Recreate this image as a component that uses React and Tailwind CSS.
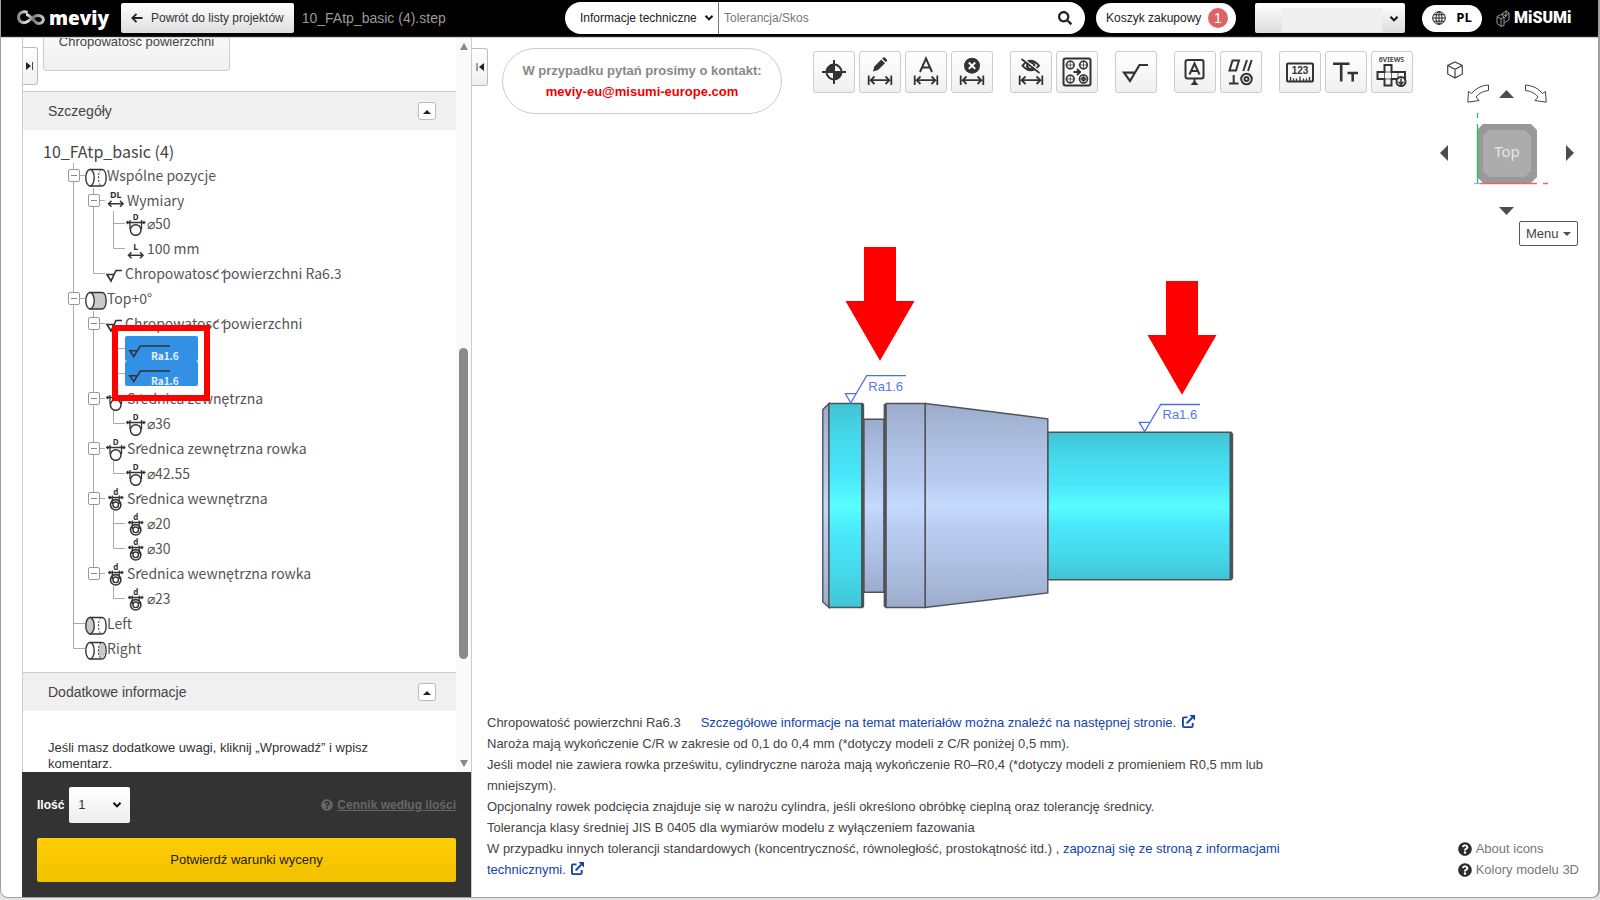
// App.jsx
import React, { useState } from 'react';
import { FaSearch, FaQuestionCircle } from 'react-icons/fa';

const INK = '#333';

// ---------- small shared drawings ----------

function Chevron({ className }) {
  return (
    <svg viewBox="0 0 10 8" className={className} aria-hidden="true">
      <path d="M1.5 1.8 5 5.4 8.5 1.8" fill="none" stroke="#111" strokeWidth="2" />
    </svg>
  );
}

function Triangle({ points, className, color = '#4d4d4d', box = '0 0 16 10' }) {
  return (
    <svg viewBox={box} className={className} aria-hidden="true">
      <polygon points={points} fill={color} />
    </svg>
  );
}

function ExternalIcon() {
  return (
    <svg viewBox="0 0 14 14" className="inline w-[13px] h-[13px] ml-[2px] -mt-1" aria-hidden="true">
      <path d="M6 2.500H2.200Q1 2.500 1 3.700V11.800Q1 13 2.200 13H10.300Q11.500 13 11.500 11.800V8.500" fill="none" stroke="#1243ad" strokeWidth="2" />
      <path d="M5 9 11 3" stroke="#1243ad" strokeWidth="2.200" />
      <path d="M8 0H14V6Z" fill="#1243ad" />
    </svg>
  );
}

// ---------- header ----------

function Header() {
  return (
    <header className="flex items-center h-[37px] shrink-0 bg-black pl-4 pr-[27px] border-b border-[#222]">
      <a href="#home" className="flex items-center gap-1 w-[104px]">
        <svg viewBox="0 0 28 16" className="w-7 h-4 shrink-0" aria-hidden="true">
          <defs>
            <linearGradient id="loop" x1="0" y1="0" x2="1" y2="0">
              <stop offset="0" stopColor="#8b858a" />
              <stop offset="0.35" stopColor="#e8e4e6" />
              <stop offset="0.6" stopColor="#7d767b" />
              <stop offset="1" stopColor="#c9c4c7" />
            </linearGradient>
          </defs>
          <path
            d="M10.500 2.500C6 .5 1.500 3 1.500 7.300C1.500 12 6.500 14 10.500 11.500C14 9 17 5.500 21 5.500C24.500 5.500 26.500 7.500 26.300 10C26 13 22 14.500 19 12.500C16 10 13 4.500 9 4.500"
            fill="none"
            stroke="url(#loop)"
            strokeWidth="3"
          />
        </svg>
        <span className="font-['Open_Sans',sans-serif] font-extrabold text-[19px] leading-6 text-white">meviy</span>
      </a>
      <button className="flex items-center h-[30px] px-[10px] gap-2 rounded-[2px] bg-linear-to-b from-white to-[#dedede] text-xs text-[#333] whitespace-nowrap">
        <svg viewBox="0 0 12 10" className="w-3 h-[10px]" aria-hidden="true">
          <path d="M5.500 .8 1.300 5 5.500 9.200M1.300 5H11.500" fill="none" stroke="#222" strokeWidth="1.800" />
        </svg>
        Powrót do listy projektów
      </button>
      <span className="ml-2 text-sm text-[#999] whitespace-nowrap">10_FAtp_basic (4).step</span>

      <form className="flex items-stretch ml-auto w-[520px] h-8 rounded-full bg-white overflow-hidden" onSubmit={(e) => e.preventDefault()}>
        <div className="relative w-[154px] border-r border-[#777]">
          <select aria-label="Zakres wyszukiwania" className="appearance-none w-full h-full pl-[15px] text-xs text-[#222] bg-transparent">
            <option>Informacje techniczne</option>
          </select>
          <Chevron className="absolute right-1 top-3 w-[10px] h-2 pointer-events-none" />
        </div>
        <input aria-label="Szukaj" placeholder="Tolerancja/Skos" className="grow px-[5px] text-xs placeholder:text-[#777] outline-none" />
        <button aria-label="Szukaj" className="pr-[13px]">
          <FaSearch className="w-[14px] h-[14px] text-[#222]" />
        </button>
      </form>
      <button className="flex items-center justify-between ml-[11px] w-[140px] h-[30px] pl-[10px] pr-2 rounded-full bg-white text-xs text-[#222] whitespace-nowrap">
        Koszyk zakupowy
        <span className="flex items-center justify-center w-5 h-5 rounded-full bg-[#e06363] text-sm text-white">1</span>
      </button>
      <div className="relative ml-[19px] w-[150px] h-[30px] rounded-[2px] bg-linear-to-b from-white to-[#dcdcdc]">
        <select aria-label="Konto" className="appearance-none w-full h-full bg-transparent" />
        <div className="absolute left-[27px] top-[5px] w-[100px] h-6 bg-[#efefef]" />
        <Chevron className="absolute right-[6px] top-3 w-[10px] h-2 pointer-events-none" />
      </div>
      <button className="flex items-center justify-center gap-[10px] ml-[17px] w-[60px] h-[27px] rounded-full bg-white text-[13px] font-bold font-['Open_Sans',sans-serif] text-black">
        <svg viewBox="0 0 14 14" className="w-[14px] h-[14px]" aria-hidden="true">
          <g fill="none" stroke="#222" strokeWidth="1">
            <circle cx="7" cy="7" r="6.300" />
            <ellipse cx="7" cy="7" rx="3" ry="6.300" />
            <path d="M7 .7V13.300M.7 7H13.300M1.700 3.800H12.300M1.700 10.200H12.300" />
          </g>
        </svg>
        PL
      </button>
      <a href="#misumi" className="flex items-center gap-1 ml-[14px] w-[75px]">
        <svg viewBox="0 0 14 17" className="w-[14px] h-[17px] shrink-0" aria-hidden="true">
          <g fill="none" stroke="#999" strokeWidth="1">
            <path d="M1 6.500 5 4.500 8 7V15.500L5 16.300 1 13.500ZM1 6.500 5 9 8 7M5 9V16" />
            <path d="M6 4 10 .8 13 3V10L8 13M10 .8V6L13 3M6 4 10 6 8 8" />
          </g>
        </svg>
        <span className="font-['Roboto',sans-serif] font-black text-[16px] leading-5 text-white">MiSUMi</span>
      </a>
    </header>
  );
}

// ---------- feature tree ----------

function Cylinder({ left = '#fff', body = '#fff', right, dashed }) {
  return (
    <svg viewBox="0 0 22 25" className="w-[22px] h-[25px] shrink-0" aria-hidden="true">
      <g stroke={INK} strokeWidth="1.400">
        <path d="M5 6.500H17C22.500 6.500 22.500 23 17 23H5Z" fill={body} />
        {right && <path d="M17 7C12 8 12 22 17 22.500C21.500 21 21.500 8 17 7Z" fill={right} stroke="none" />}
        <ellipse cx="5" cy="14.700" rx="4.200" ry="8.200" fill={left} />
        {dashed && <path d="M16 7C12.500 9 12.500 20.500 16 22.500" fill="none" strokeWidth="1" strokeDasharray="2 1.500" />}
      </g>
    </svg>
  );
}

function Diameter({ inner }) {
  return (
    <svg viewBox="0 0 22 25" className="w-[22px] h-[25px] shrink-0" aria-hidden="true">
      <text x="10.700" y="9" textAnchor="middle" fontSize="8" fontWeight="700" fontFamily="Noto Sans" fill={INK}>
        {inner ? 'd' : 'D'}
      </text>
      <g fill="none" stroke={INK} strokeWidth="1.300">
        {inner ? (
          <>
            <path d="M3 11.500H18.500M7.300 9.500V18M14.200 9.500V18" />
            <circle cx="10.700" cy="18.800" r="5.200" strokeWidth="1.600" />
            <circle cx="10.700" cy="18.800" r="2.800" strokeWidth="1.400" />
          </>
        ) : (
          <>
            <path d="M1 11.500H20.500M5 9V18M16.500 9V18" />
            <circle cx="10.700" cy="19" r="5.300" fill="#fff" strokeWidth="1.500" />
          </>
        )}
      </g>
      <path d={inner ? 'M4 9.500 7 11.500 4 13.500ZM17.500 9.500 14.500 11.500 17.500 13.500Z' : 'M2 9.500 5 11.500 2 13.500ZM19.500 9.500 16.500 11.500 19.500 13.500Z'} fill={INK} />
    </svg>
  );
}

function Length({ letters, low }) {
  return (
    <svg viewBox="0 0 22 25" className="w-[22px] h-[25px] shrink-0" aria-hidden="true">
      <text x="10.700" y={low ? 13.500 : 9.500} textAnchor="middle" fontSize="9" fontWeight="700" fontFamily="Noto Sans" fill={INK}>
        {letters}
      </text>
      <g transform={low ? 'translate(0 3.500)' : undefined} fill="none" stroke={INK} strokeWidth="1.500">
        <path d="M3.500 15.700H18M6.500 12.700 3.500 15.700 6.500 18.700M15 12.700 18 15.700 15 18.700" />
      </g>
    </svg>
  );
}

function Rough() {
  return (
    <svg viewBox="0 0 20 25" className="w-5 h-[25px] shrink-0" aria-hidden="true">
      <path d="M9.500 13.500H2L6 20 11 9.500H17" fill="none" stroke={INK} strokeWidth="1.700" />
    </svg>
  );
}

const GREY = '#c9c9c9';

// guides: one letter for each gutter column
// "|" passes by, "t" branches, "l" ends, " " is empty
// "T" and "L" are the same two with a toggle, "F" is the first of its list
const rows = [
  { guides: 'F', icon: <Cylinder dashed />, label: 'Wspólne pozycje' },
  { guides: '|F', icon: <Length letters="DL" />, label: 'Wymiary', short: true },
  { guides: '||t', icon: <Diameter />, label: '⌀50' },
  { guides: '||l', icon: <Length letters="L" low />, label: '100 mm' },
  { guides: '|l', icon: <Rough />, label: 'Chropowatość powierzchni Ra6.3' },
  { guides: 'T', icon: <Cylinder body={GREY} />, label: 'Top+0°' },
  { guides: '|F', icon: <Rough />, label: 'Chropowatość powierzchni' },
  { guides: '||t', selected: 'Ra1.6' },
  { guides: '||l', selected: 'Ra1.6' },
  { guides: '|T', icon: <Diameter />, label: 'Średnica zewnętrzna' },
  { guides: '||l', icon: <Diameter />, label: '⌀36' },
  { guides: '|T', icon: <Diameter />, label: 'Średnica zewnętrzna rowka' },
  { guides: '||l', icon: <Diameter />, label: '⌀42.55' },
  { guides: '|T', icon: <Diameter inner />, label: 'Średnica wewnętrzna' },
  { guides: '||t', icon: <Diameter inner />, label: '⌀20' },
  { guides: '||l', icon: <Diameter inner />, label: '⌀30' },
  { guides: '|L', icon: <Diameter inner />, label: 'Średnica wewnętrzna rowka' },
  { guides: '| l', icon: <Diameter inner />, label: '⌀23' },
  { guides: 't', icon: <Cylinder left={GREY} dashed />, label: 'Left' },
  { guides: 'l', icon: <Cylinder right={GREY} dashed />, label: 'Right' },
];

function Guide({ kind, last }) {
  const toggle = 'TLF'.includes(kind);
  const bottom = 'lL'.includes(kind) ? 12.500 : 25;
  const drawing = (
    <svg viewBox={last ? '0 0 17 25' : '0 0 20 25'} className={last ? 'w-[17px] h-[25px]' : 'w-5 h-[25px]'} aria-hidden="true">
      <g fill="none" stroke="#aaa" strokeWidth="1">
        {kind !== ' ' && <path d={`M5.500 0V${bottom}`} />}
        {last && <path d="M5.500 12.500H17" />}
        {toggle && <rect x=".5" y="6.500" width="11" height="12" rx="1.500" fill="#fff" stroke="#999" />}
        {toggle && <path d="M3 12.500H9" stroke="#888" />}
      </g>
    </svg>
  );
  return toggle ? (
    <button aria-label="Zwiń" className="shrink-0">{drawing}</button>
  ) : (
    <span className="shrink-0">{drawing}</span>
  );
}

function Tree() {
  return (
    <div className="relative pt-[10px] pl-5 h-[542px] font-['Noto_Sans_CJK_JP',sans-serif]">
      <p className="text-base leading-[22px] text-[#444]">10_FAtp_basic (4)</p>
      <ul className="pt-px pl-[25px]">
        {rows.map((row, i) => (
          <li key={i} className={row.short ? 'flex h-[23px]' : 'flex h-[25px]'}>
            {row.guides.split('').map((kind, n) => (
              <Guide key={n} kind={kind} last={n === row.guides.length - 1} />
            ))}
            {row.selected ? (
              <button className="grid w-[73px] rounded-[2px] bg-[#3391e5]">
                <svg viewBox="0 0 73 25" className="col-start-1 row-start-1 w-[73px] h-[25px]" aria-hidden="true">
                  <path d="M11.500 14.700H4.800L8.700 20.500 15.300 10H45" fill="none" stroke={INK} strokeWidth="1.500" />
                </svg>
                <span className="col-start-1 row-start-1 pt-3 pl-[26px] text-left text-[10px] leading-4 font-bold text-[#e6f1fc]">{row.selected}</span>
              </button>
            ) : (
              <a href="#node" className="flex whitespace-nowrap text-sm leading-[25px] text-[#555]">
                {row.icon}
                {row.label}
              </a>
            )}
          </li>
        ))}
      </ul>
      {/* highlight frame over the selected nodes */}
      <div className="absolute left-[89px] top-[195px] w-[98px] h-[76px] border-[6px] border-[#f00]" />
    </div>
  );
}

// ---------- left panel ----------

function SectionHead({ title }) {
  return (
    <div className="flex items-center justify-between h-[39px] pl-[25px] pr-5 bg-[#f0f0f0] border-t border-[#ccc]">
      <h2 className="text-sm text-[#444]">{title}</h2>
      <button aria-label={`Zwiń: ${title}`} className="flex items-center justify-center w-[18px] h-[18px] rounded-[3px] border border-[#bbb] bg-white">
        <Triangle points="0,6 4,2 8,6" box="0 0 8 7" color="#222" className="w-2 h-[7px]" />
      </button>
    </div>
  );
}

function Sidebar() {
  const [qty, setQty] = useState('1');
  return (
    <aside className="flex flex-col w-[450px] shrink-0 border-x border-[#ccc]">
      <div className="flex grow min-h-0">
        <div className="grow min-w-0 overflow-hidden">
          <div className="flex h-[53px]">
            <button aria-label="Rozwiń panel" className="flex items-center justify-center mt-[9px] w-[15px] h-[38px] rounded-r-[3px] border border-l-0 border-[#bbb] bg-linear-to-b from-white to-[#f0f0f0]">
              <svg viewBox="0 0 8 10" className="w-2 h-[10px]" aria-hidden="true">
                <path d="M0 1 5 5 0 9Z" fill="#222" />
                <path d="M6.500 1V9" stroke="#444" />
              </svg>
            </button>
            <button className="-mt-[26px] ml-[5px] w-[187px] h-[59px] rounded-[3px] border border-[#ccc] bg-linear-to-b from-white to-[#f0f0f0] text-[13px] text-[#444]">
              Chropowatość powierzchni
            </button>
          </div>
          <SectionHead title="Szczegóły" />
          <Tree />
          <SectionHead title="Dodatkowe informacje" />
          <p className="pt-[29px] pl-[25px] pr-16 text-[13px] leading-4 text-[#333]">
            Jeśli masz dodatkowe uwagi, kliknij „Wprowadź” i wpisz komentarz.
          </p>
        </div>
        {/* scrollbar */}
        <div className="flex flex-col items-center w-[15px] shrink-0 py-1 bg-[#fafafa]">
          <Triangle points="1,8 5,1 9,8" box="0 0 10 8" color="#888" className="w-[10px] h-2" />
          <div className="grow-295" />
          <div className="grow-309 w-[9px] rounded-full bg-[#8a8a8a]" />
          <div className="grow-100" />
          <Triangle points="1,0 5,7 9,0" box="0 0 10 8" color="#888" className="w-[10px] h-2" />
        </div>
      </div>
      <div className="shrink-0 h-[125px] -ml-px pt-[15px] pl-[15px] pr-[15px] bg-[#333]">
        <div className="flex items-center justify-between">
          <div className="flex items-center gap-[5px]">
            <label htmlFor="qty" className="text-xs font-bold text-white">Ilość</label>
            <div className="relative w-[61px] h-9 rounded-[2px] bg-linear-to-b from-white to-[#eee]">
              <select id="qty" value={qty} onChange={(e) => setQty(e.target.value)} className="appearance-none w-full h-full pl-[9px] text-[13px] text-[#333] bg-transparent">
                <option>1</option>
                <option>2</option>
                <option>3</option>
              </select>
              <Chevron className="absolute right-2 top-[14px] w-[10px] h-2 pointer-events-none" />
            </div>
          </div>
          <a href="#prices" className="flex items-center gap-1 text-xs font-bold text-[#666]">
            <FaQuestionCircle className="w-3 h-3" />
            <span className="underline">Cennik według ilości</span>
          </a>
        </div>
        <button className="mt-[15px] w-full h-[44px] rounded-[2px] bg-linear-to-b from-[#ffcd05] to-[#f1c100] text-[13px] text-[#222]">
          Potwierdź warunki wyceny
        </button>
      </div>
    </aside>
  );
}

// ---------- toolbar ----------

const span = <path d="M9.700 24.500V34M32.300 24.500V34M11.500 29.200H30.500M15.500 25.500 11.700 29.200 15.500 33M26.500 25.500 30.300 29.200 26.500 33" strokeWidth="1.800" />;

const tools = [
  [
    {
      name: 'Punkt odniesienia',
      art: (
        <>
          <circle cx="21" cy="21" r="7.500" />
          <path d="M21 9V33M9 21H33" />
          <path d="M21 21V13.500A7.500 7.500 0 0 0 13.500 21ZM21 21V28.500A7.500 7.500 0 0 0 28.500 21Z" fill={INK} stroke="none" />
        </>
      ),
    },
    {
      name: 'Edytuj wymiar',
      art: (
        <>
          {span}
          <path d="M14 20.500 15.300 15.500 22.300 8.500 26 12.200 19 19ZM23.200 7.600 24.300 6.600Q25.300 6 26.300 6.900L27.600 8.200Q28.500 9.200 27.800 10.200L26.900 11.300Z" fill={INK} stroke="none" />
        </>
      ),
    },
    { name: 'Wymiar automatyczny', art: <>{span}<path d="M15 21 21 7.500 27 21M17 16.500H25" /></> },
    {
      name: 'Usuń wymiar',
      art: (
        <>
          {span}
          <circle cx="21" cy="14.700" r="8" fill={INK} stroke="none" />
          <path d="M17.800 11.500 24.200 17.900M24.200 11.500 17.800 17.900" stroke="#fff" />
        </>
      ),
    },
  ],
  [
    {
      name: 'Ukryj wymiary',
      art: (
        <>
          {span}
          <path d="M12.500 14.700Q20.700 5 29 14.700Q20.700 24 12.500 14.700Z" />
          <circle cx="20.700" cy="14.700" r="3.500" strokeWidth="2.400" />
          <path d="M12.500 7 30.500 21" stroke="#fff" strokeWidth="1.400" />
          <path d="M11.500 8 29.500 22" strokeWidth="1.600" />
        </>
      ),
    },
    {
      name: 'Grupa otworów',
      art: (
        <>
          <rect x="7.500" y="7.500" width="27" height="27" rx="2" />
          <g strokeWidth="1.600">
            <circle cx="14.300" cy="14" r="3.800" />
            <circle cx="27.500" cy="14" r="3.800" />
            <circle cx="14.300" cy="28" r="3.800" />
            <circle cx="27.500" cy="28" r="4" />
            <circle cx="27.500" cy="28" r="1.600" />
          </g>
          <path d="M9.500 14H19M14.300 9.300V18.700M22.800 14H32.200M27.500 9.300V18.700M9.500 28H19M14.300 23.300V32.700M22.800 28H32.200M27.500 23.300V32.700" strokeWidth=".7" />
          <path d="M17.500 21H23.500M21 18 24 21 21 24" />
        </>
      ),
    },
  ],
  [{ name: 'Chropowatość', art: <path d="M20 21.700H9L15 30 24.500 14H33" strokeWidth="2.200" /> }],
  [
    {
      name: 'Baza',
      art: (
        <>
          <rect x="11.500" y="9" width="18" height="18.500" rx="2" />
          <path d="M15.500 23.500 20.500 12.500 25.500 23.500M17.300 20H23.700" />
          <path d="M20.500 27.500V32" />
          <path d="M16.500 34 20.500 29.500 24.500 34Z" fill={INK} stroke="none" />
        </>
      ),
    },
    {
      name: 'Tolerancje geometryczne',
      art: (
        <>
          <path d="M9.500 19.500 12.500 9.500H19L16 19.500ZM23.300 20 27 9M28 20 31.700 9M9 32.500H18.500M13.700 24V32.500" />
          <circle cx="26.500" cy="28" r="5.300" />
          <circle cx="26.500" cy="28" r="2" />
        </>
      ),
    },
  ],
  [
    {
      name: 'Pomiar',
      art: (
        <>
          <rect x="8" y="12.500" width="26" height="18" rx="1" />
          <text x="21" y="23" textAnchor="middle" fontSize="10" fontWeight="700" fill={INK} stroke="none">123</text>
          <path d="M11.500 30V26M14.500 30V27.500M17.500 30V27.500M21 30V25.500M24.500 30V27.500M27.500 30V27.500M30.500 30V26" strokeWidth="1.300" />
        </>
      ),
    },
    { name: 'Tekst', art: <path d="M8 12.700H24.500M16.200 12.700V30.500M22.500 22H33M27.700 22V30.500" strokeWidth="2.600" /> },
    {
      name: 'Sześć widoków',
      art: (
        <>
          <text x="20.500" y="10.500" textAnchor="middle" fontSize="7" fontWeight="600" fontFamily="Noto Sans" fill={INK} stroke="none">6VIEWS</text>
          <path d="M13.500 14H20.500V21H34V28H20.500V34.500H13.500V28H6.500V21H13.500Z" />
          <path d="M13.500 21H20.500V28H13.500ZM27 21V28" strokeWidth=".7" />
          <circle cx="30" cy="30.500" r="4.500" fill="#f6f6f6" />
          <path d="M30 27.500V33M27.500 30.700 30 33.300 32.500 30.700" strokeWidth="1.500" />
        </>
      ),
    },
  ],
];

function Toolbar() {
  return (
    <div className="flex gap-[17px] mt-[13px] ml-[31px] shrink-0">
      {tools.map((group, i) => (
        <div key={i} className="flex gap-1">
          {group.map((tool) => (
            <button key={tool.name} aria-label={tool.name} className="w-[42px] h-[42px] rounded-[3px] border border-[#ccc] bg-linear-to-b from-white to-[#f0f0f0]">
              <svg viewBox="1 1 40 40" className="w-10 h-10" fill="none" stroke={INK} strokeWidth="2" aria-hidden="true">
                {tool.art}
              </svg>
            </button>
          ))}
        </div>
      ))}
    </div>
  );
}

// ---------- view cube ----------

function ViewCube() {
  return (
    <div className="flex flex-col w-[142px] mt-[23px] ml-auto mr-5">
      <button aria-label="Widok izometryczny" className="ml-[11px] w-4 h-[18px]">
        <svg viewBox="0 0 16 18" className="w-4 h-[18px]" fill="none" stroke="#444" strokeWidth="1.200" aria-hidden="true">
          <path d="M8 1 15.300 4.500V13L8 17 .7 13V4.500ZM.7 4.500 8 8.300 15.300 4.500M8 8.300V17" />
        </svg>
      </button>
      <div className="flex items-center justify-center gap-[10px] mt-[5px]">
        <button aria-label="Obróć w lewo">
          <svg viewBox="0 0 22 19" className="w-[22px] h-[19px]" fill="none" stroke="#444" aria-hidden="true">
            <path d="M21.500 1V6.500Q13 7.500 9 13L12 16.500 .8 18.200 1.500 7.500 4.500 9.500Q11 1.500 21.500 1Z" />
          </svg>
        </button>
        <button aria-label="W górę">
          <Triangle points="0,9 7.500,1 15,9" className="w-4 h-[10px]" />
        </button>
        <button aria-label="Obróć w prawo">
          <svg viewBox="0 0 22 19" className="w-[22px] h-[19px]" fill="none" stroke="#444" aria-hidden="true">
            <path d="M.5 1V6.500Q9 7.500 13 13L10 16.500 21.200 18.200 20.500 7.500 17.500 9.500Q11 1.500 .5 1Z" />
          </svg>
        </button>
      </div>
      <div className="flex items-center justify-between px-1 mt-2">
        <button aria-label="W lewo">
          <Triangle points="0,8 8,0 8,16" box="0 0 8 16" className="w-2 h-4" />
        </button>
        <svg viewBox="1466 112 84 84" className="w-[84px] h-[84px]" aria-hidden="true">
          <path d="M1484 125H1532L1538 131V178L1532 184H1484L1478 178V131Z" fill="#999" />
          <path d="M1490 131H1526L1532 137V172L1526 178H1490L1484 172V137Z" fill="#acacac" />
          <path d="M1478.500 114V119M1478.500 125V184" stroke="#27c24c" strokeWidth="1.300" />
          <path d="M1481 184.500H1538M1544 184.500H1549" stroke="#f26363" strokeWidth="1.300" />
          <path d="M1475 184.500H1481" stroke="#7ab8f5" strokeWidth="1.300" />
          <text x="1508" y="158" textAnchor="middle" fontSize="15" fontFamily="Noto Sans" fill="#e6e6e6">Top</text>
        </svg>
        <button aria-label="W prawo">
          <Triangle points="8,8 0,0 0,16" box="0 0 8 16" className="w-2 h-4" />
        </button>
      </div>
      <button aria-label="W dół" className="self-center mt-[11px]">
        <Triangle points="0,1 7.500,9 15,1" className="w-4 h-[10px]" />
      </button>
      <button className="self-end flex items-center justify-between mt-[5px] w-[59px] h-[25px] px-[6px] rounded-[2px] border border-[#555] bg-white text-[13px] text-[#444]">
        Menu
        <Triangle points="0,1 4,5 8,1" box="0 0 8 6" className="w-2 h-[6px]" />
      </button>
    </div>
  );
}

// ---------- 3D model ----------

function Model() {
  const edge = '#505257';
  return (
    <svg viewBox="0 0 470 375" className="self-center w-[470px] h-[375px] shrink-0" aria-label="Model 3D">
      <defs>
        <linearGradient id="steel" x1="0" y1="0" x2="0" y2="1">
          <stop offset="0" stopColor="#9cabcc" />
          <stop offset=".18" stopColor="#abbddf" />
          <stop offset=".38" stopColor="#b9cbf0" />
          <stop offset=".5" stopColor="#c5d9fd" />
          <stop offset=".62" stopColor="#b9cbf0" />
          <stop offset=".82" stopColor="#abbddf" />
          <stop offset="1" stopColor="#9cabcc" />
        </linearGradient>
        <linearGradient id="cyan" x1="0" y1="0" x2="0" y2="1">
          <stop offset="0" stopColor="#40c4d6" />
          <stop offset=".15" stopColor="#45d7e8" />
          <stop offset=".35" stopColor="#49e6fb" />
          <stop offset=".5" stopColor="#58fdff" />
          <stop offset=".65" stopColor="#49e6fb" />
          <stop offset=".85" stopColor="#45d7e8" />
          <stop offset="1" stopColor="#40c4d6" />
        </linearGradient>
      </defs>

      <g stroke={edge} strokeWidth="1.400">
        <path d="M29 157.500 22.800 163.500V356L29 361.500Z" fill="url(#steel)" />
        <path d="M29 157.500H62.500L63.500 159V360L62.500 361.500H29Z" fill="url(#cyan)" />
        <path d="M64 173.300H84V346.300H64Z" fill="url(#steel)" />
        <path d="M86 157.500H125.300V361.500H86L84.500 360V159Z" fill="url(#steel)" />
        <path d="M125.300 157.500 247.800 172.800V347L125.300 361.500Z" fill="url(#steel)" />
        <path d="M248 186.300H431L432.500 188V332L431 333.700H248Z" fill="url(#cyan)" />
        <path d="M62.500 158V361M85.300 158V361M431 187V333" strokeWidth="3" />
      </g>

      <g fill="none" stroke="#4c6ef0" strokeWidth="1.300">
        <path d="M56 147.700H45.500L50.700 157 66.700 129.700H106" />
        <path d="M350 176.300H339.300L344.700 185.500 360.700 158.500H400" />
      </g>
      <g fill="#5876e8" fontSize="13">
        <text x="68.300" y="144.500">Ra1.6</text>
        <text x="362.500" y="173">Ra1.6</text>
      </g>
      <g fill="#f00">
        <path d="M64 1H96V55H114.500L80 114.700 45.500 55H64Z" />
        <path d="M366 35H398V89H416.500L382 148.700 347.500 89H366Z" />
      </g>
    </svg>
  );
}

// ---------- viewer ----------

function Notes() {
  return (
    <div className="flex items-end justify-between mt-auto pl-[15px] pr-[19px] pb-[17px]">
      <div className="max-w-[800px] text-[13px] leading-[21px] text-[#444]">
        <p>
          Chropowatość powierzchni Ra6.3
          <a href="#materials" className="ml-5 text-[#1243ad]">
            Szczegółowe informacje na temat materiałów można znaleźć na następnej stronie. <ExternalIcon />
          </a>
        </p>
        <p>Naroża mają wykończenie C/R w zakresie od 0,1 do 0,4 mm (*dotyczy modeli z C/R poniżej 0,5 mm).</p>
        <p>Jeśli model nie zawiera rowka prześwitu, cylindryczne naroża mają wykończenie R0–R0,4 (*dotyczy modeli z promieniem R0,5 mm lub mniejszym).</p>
        <p>Opcjonalny rowek podcięcia znajduje się w narożu cylindra, jeśli określono obróbkę cieplną oraz tolerancję średnicy.</p>
        <p>Tolerancja klasy średniej JIS B 0405 dla wymiarów modelu z wyłączeniem fazowania</p>
        <p>
          W przypadku innych tolerancji standardowych (koncentryczność, równoległość, prostokątność itd.) ,{' '}
          <a href="#technical" className="text-[#1243ad]">
            zapoznaj się ze stroną z informacjami technicznymi. <ExternalIcon />
          </a>
        </p>
      </div>
      <div className="text-[13px] leading-[21px] text-[#777]">
        <a href="#icons" className="flex items-center gap-1">
          <FaQuestionCircle className="w-[14px] h-[14px] text-[#2b2b2b]" />
          About icons
        </a>
        <a href="#colors" className="flex items-center gap-1">
          <FaQuestionCircle className="w-[14px] h-[14px] text-[#2b2b2b]" />
          Kolory modelu 3D
        </a>
      </div>
    </div>
  );
}

function Viewer() {
  return (
    <main className="flex flex-col grow min-w-0">
      <div className="flex items-start">
        <button aria-label="Zwiń panel" className="flex items-center justify-center mt-[10px] w-4 h-[38px] rounded-r-[3px] border border-l-0 border-[#bbb] bg-linear-to-b from-white to-[#f0f0f0]">
          <svg viewBox="0 0 8 10" className="w-2 h-[10px]" aria-hidden="true">
            <path d="M8 1 3 5 8 9Z" fill="#222" />
            <path d="M1 1V9" stroke="#444" />
          </svg>
        </button>
        <div className="flex flex-col justify-center mt-[10px] ml-[14px] w-[280px] h-[66px] shrink-0 rounded-full border border-[#ccc] text-center text-[13px] leading-[21px] font-bold text-[#888]">
          <p>W przypadku pytań prosimy o kontakt:</p>
          <a href="mailto:meviy-eu@misumi-europe.com" className="text-[#f00000]">meviy-eu@misumi-europe.com</a>
        </div>
        <Toolbar />
        <ViewCube />
      </div>
      <Model />
      <Notes />
    </main>
  );
}

function App() {
  return (
    <div className="h-screen pb-[2px] bg-[#e4e4e4] font-['Liberation_Sans',Arial,sans-serif]">
      <div className="flex flex-col h-full border border-t-0 border-r-2 border-[#a0a0a0] rounded-b-lg bg-white overflow-hidden">
        <Header />
        <div className="flex grow min-h-0 pl-[21px] border-t border-[#ccc]">
          <Sidebar />
          <Viewer />
        </div>
      </div>
    </div>
  );
}

export default App;
